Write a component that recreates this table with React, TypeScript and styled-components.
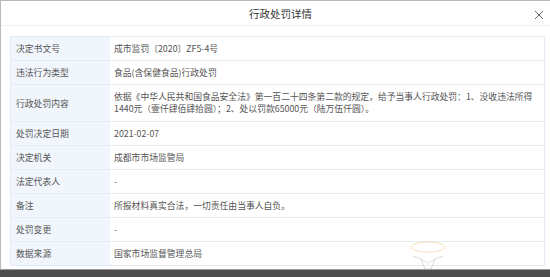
import styled, { createGlobalStyle } from "styled-components"

const GlobalStyle = createGlobalStyle`
  html, body {
    margin: 0;
    padding: 0;
    background: #4d4d4d;
    overflow: hidden;
  }
  body {
    font-family: "Noto Sans CJK SC", "Noto Sans", sans-serif;
  }
`

const rows: { label: string; value: React.ReactNode }[] = [
  { label: "决定书文号", value: "成市监罚〔2020〕ZF5-4号" },
  { label: "违法行为类型", value: "食品(含保健食品)行政处罚" },
  {
    label: "行政处罚内容",
    value: (
      <>
        依据《中华人民共和国食品安全法》第一百二十四条第二款的规定，给予当事人行政处罚：1、没收违法所得
        <br />
        1440元（壹仟肆佰肆拾圆）；2、处以罚款65000元（陆万伍仟圆）。
      </>
    ),
  },
  { label: "处罚决定日期", value: "2021-02-07" },
  { label: "决定机关", value: "成都市市场监管局" },
  { label: "法定代表人", value: "-" },
  { label: "备注", value: "所报材料真实合法，一切责任由当事人自负。" },
  { label: "处罚变更", value: "-" },
  { label: "数据来源", value: "国家市场监督管理总局" },
]

const Modal = styled.div`
  position: relative;
  width: 560px;
  height: 270px;
  background: #fff;
  border-top: 1px solid #b9b9b9;
  border-left: 1px solid #b9b9b9;
  border-bottom: 1px solid #9a9a9a;
  box-sizing: border-box;
`

const Header = styled.div`
  display: flex;
  align-items: center;
  justify-content: center;
  height: 24px;
  border-bottom: 1px solid #f0f0f0;
  font-size: 10.5px;
  color: #333;
  position: relative;
`

const Close = styled.span`
  position: absolute;
  left: 533px;
  top: 7px;
  width: 10px;
  height: 10px;
`

const Table = styled.div`
  margin: 10px 0 0 9px;
  width: 533px;
  border: 1px solid #e3ecf6;
  border-bottom: none;
`

const Row = styled.div`
  display: grid;
  grid-template-columns: 99px 1fr;
  border-bottom: 1px solid #e3ecf6;
`

const Label = styled.div<{ $tall?: boolean }>`
  background: #f1f6fc;
  color: #555;
  font-size: 8.8px;
  padding: 0 5px;
  display: flex;
  align-items: center;
  height: ${(p) => (p.$tall ? "36px" : "23px")};
`

const Value = styled.div`
  color: #555;
  font-size: 8.8px;
  line-height: 12px;
  padding: 0 4px;
  white-space: nowrap;
  display: flex;
  align-items: center;
`

const Watermark = styled.svg`
  position: absolute;
  left: 408px;
  top: 240px;
  opacity: 0.55;
`

export default function App() {
  return (
    <>
      <GlobalStyle />
      <Modal>
        <Header>
          行政处罚详情
          <Close>
            <svg width="10" height="10" viewBox="0 0 10 10">
              <path d="M1 1L9 9M9 1L1 9" stroke="#666" strokeWidth="1" />
            </svg>
          </Close>
        </Header>
        <Table>
          {rows.map((r) => (
            <Row key={r.label}>
              <Label $tall={r.label === "行政处罚内容"}>{r.label}</Label>
              <Value>
                <span>{r.value}</span>
              </Value>
            </Row>
          ))}
        </Table>
        <Watermark width="40" height="32" viewBox="0 0 40 32">
          <ellipse cx="19" cy="6" rx="17" ry="5" fill="none" stroke="#f2c98a" strokeWidth="1" />
          <path d="M4 15 L12 18 L16 28 L22 28 L26 18 L34 15" fill="none" stroke="#bbb" strokeWidth="1" />
          <path d="M12 18 L19 22 L26 18" fill="none" stroke="#ccc" strokeWidth="1" />
        </Watermark>
      </Modal>
    </>
  )
}
